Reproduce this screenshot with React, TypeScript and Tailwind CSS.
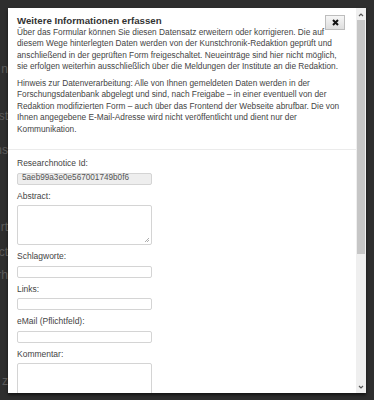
import React from "react";

const bgFragments = [
    { top: 60, text: "n" },
    { top: 107, text: "st" },
    { top: 141, text: "ns" },
    { top: 218, text: "rt" },
    { top: 243, text: "ct" },
    { top: 266, text: "rh" },
    { top: 372, text: "z" },
];

function Field({ label, children }: { label: string; children: React.ReactNode }) {
    return (
        <div>
            <div className="leading-[11.5px] mb-[3px]">{label}</div>
            {children}
        </div>
    );
}

function TextInput({ value, readOnly }: { value?: string; readOnly?: boolean }) {
    return (
        <div
            className={`w-[135px] h-[12px] mb-[6px] border border-[#d4d4d4] rounded-[2px] px-[4px] flex items-center text-[8.2px] text-[#555] ${readOnly ? "bg-[#eeeeee]" : "bg-white"}`}
        >
            {value}
        </div>
    );
}

function TextArea({ grip }: { grip?: boolean }) {
    return (
        <div className="relative w-[135px] h-[40px] mb-[6px] border border-[#d4d4d4] rounded-[2px] bg-white">
            {grip && (
                <svg className="absolute right-[1px] bottom-[1px]" width="6" height="6" viewBox="0 0 6 6">
                    <path d="M5 1 L1 5 M5 3 L3 5" stroke="#999" strokeWidth="0.8" />
                </svg>
            )}
        </div>
    );
}

export default function App() {
    return (
        <div className="relative w-[374px] h-[400px] overflow-hidden bg-[#2e2e2e] font-['Liberation_Sans',Arial,sans-serif]">
            {/* page behind the overlay */}
            <div className="absolute left-0 top-0 w-[8px] h-full overflow-hidden">
                {bgFragments.map((f) => (
                    <span key={f.top} className="absolute right-0 text-[12px] text-[#5a5a5a] whitespace-nowrap" style={{ top: f.top }}>
                        {f.text}
                    </span>
                ))}
            </div>

            <div className="pt-[8px] pl-[8px]">
                <div className="w-[358px] h-[385px] bg-white flex shadow-[0_2px_3px_rgba(0,0,0,0.6)]">
                    <div className="flex-1 overflow-hidden text-[8.5px] text-[#444]">
                        <div className="px-[9px] pt-[7px] pb-[14px] border-b border-[#ebebeb]">
                            <button className="float-right mt-[0px] mr-[2px] ml-[2px] w-[20px] h-[15px] border border-[#bdbdbd] bg-gradient-to-b from-[#f6f6f6] to-[#dedede] flex items-center justify-center">
                                <svg width="7" height="7" viewBox="0 0 7 7">
                                    <path d="M1 1 L6 6 M6 1 L1 6" stroke="#111" strokeWidth="2" />
                                </svg>
                            </button>
                            <div className="text-[9.7px] font-bold text-[#333] leading-[11.5px]">Weitere Informationen erfassen</div>
                            <p className="leading-[11.5px] text-[8.3px] whitespace-nowrap">
                                Über das Formular können Sie diesen Datensatz erweitern oder korrigieren. Die auf<br />
                                diesem Wege hinterlegten Daten werden von der Kunstchronik-Redaktion geprüft und<br />
                                anschließend in der geprüften Form freigeschaltet. Neueinträge sind hier nicht möglich,<br />
                                sie erfolgen weiterhin ausschließlich über die Meldungen der Institute an die Redaktion.
                            </p>
                            <p className="leading-[11.5px] text-[8.3px] mt-[5px] whitespace-nowrap">
                                Hinweis zur Datenverarbeitung: Alle von Ihnen gemeldeten Daten werden in der<br />
                                Forschungsdatenbank abgelegt und sind, nach Freigabe – in einer eventuell von der<br />
                                Redaktion modifizierten Form – auch über das Frontend der Webseite abrufbar. Die von<br />
                                Ihnen angegebene E-Mail-Adresse wird nicht veröffentlicht und dient nur der<br />
                                Kommunikation.
                            </p>
                        </div>

                        <div className="px-[9px] pt-[8px]">
                            <Field label="Researchnotice Id:">
                                <TextInput value="5aeb99a3e0e567001749b0f6" readOnly />
                            </Field>
                            <Field label="Abstract:">
                                <TextArea grip />
                            </Field>
                            <Field label="Schlagworte:">
                                <TextInput />
                            </Field>
                            <Field label="Links:">
                                <TextInput />
                            </Field>
                            <Field label="eMail (Pflichtfeld):">
                                <TextInput />
                            </Field>
                            <Field label="Kommentar:">
                                <TextArea />
                            </Field>
                        </div>
                    </div>

                    {/* scrollbar */}
                    <div className="w-[10px] bg-[#efefef] flex flex-col items-center">
                        <svg className="mt-[4px]" width="6" height="5" viewBox="0 0 6 5">
                            <path d="M1 4 L3 2 L5 4" stroke="#555" strokeWidth="1.2" fill="none" />
                        </svg>
                        <div className="mt-[3px] w-[8px] h-[234px] bg-[#c6c6c6]" />
                        <div className="flex-1" />
                        <svg className="mb-[3px]" width="6" height="5" viewBox="0 0 6 5">
                            <path d="M1 1 L3 3 L5 1" stroke="#555" strokeWidth="1.2" fill="none" />
                        </svg>
                    </div>
                </div>
            </div>
        </div>
    );
}
